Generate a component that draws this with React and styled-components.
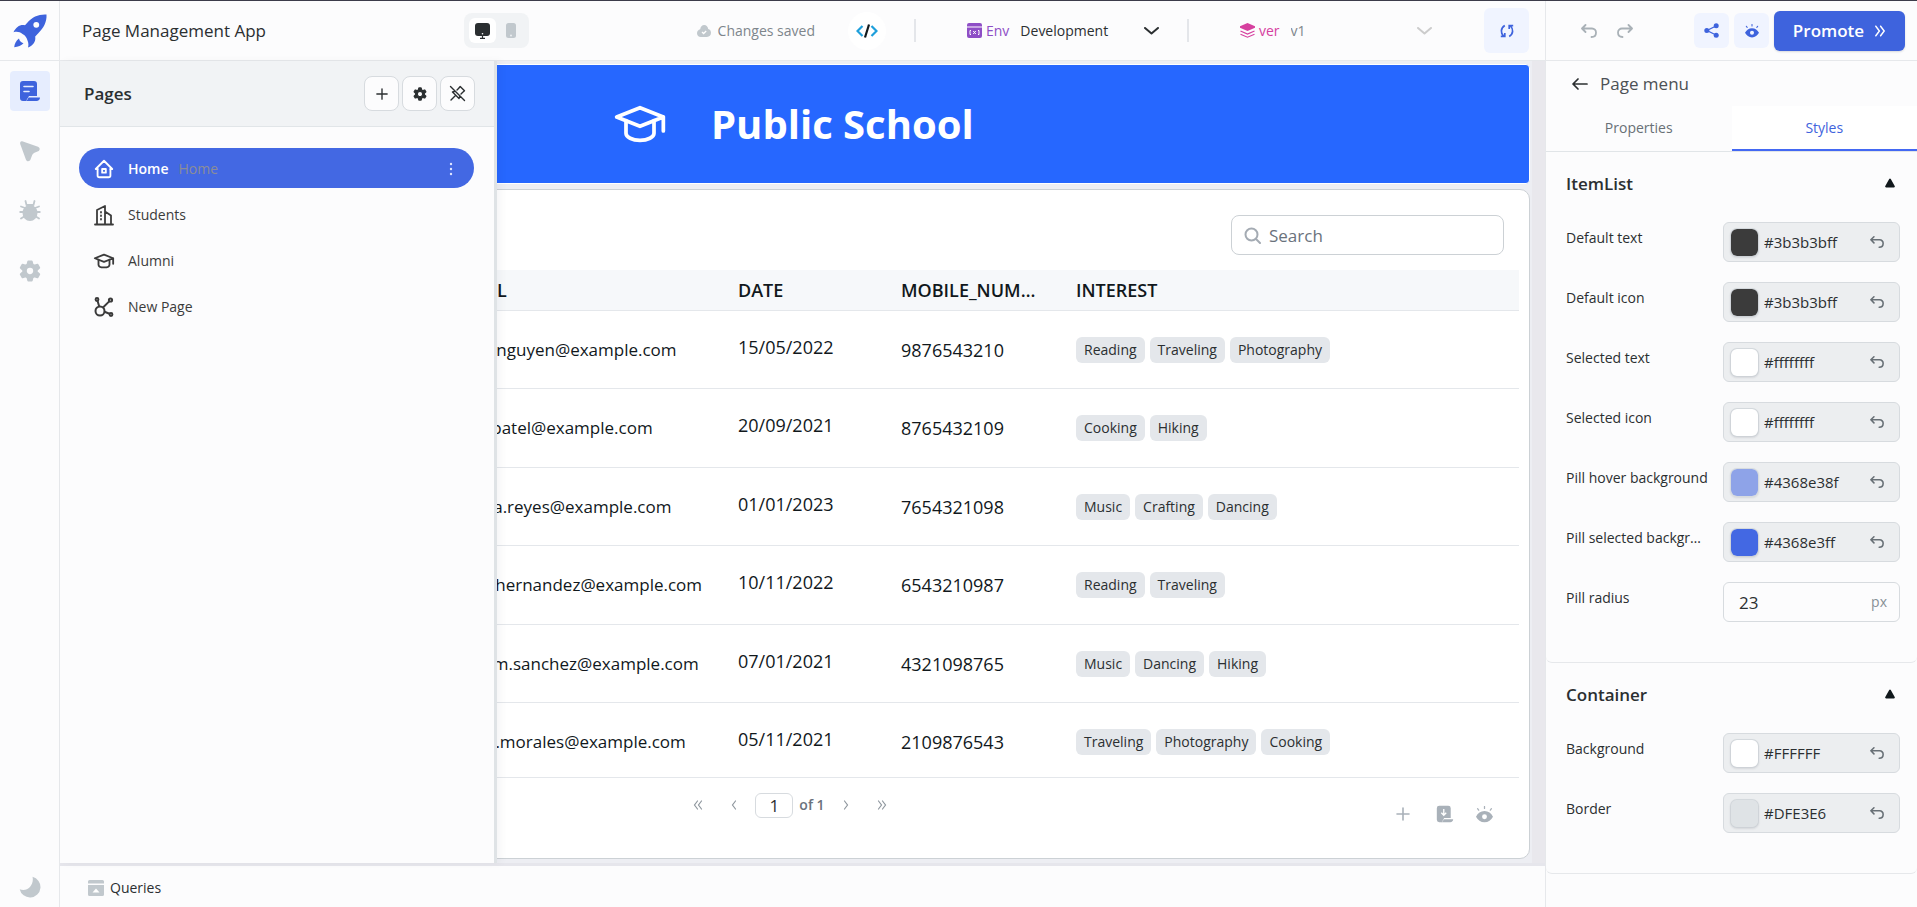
import React, { useState } from 'react';
import styled, { createGlobalStyle } from 'styled-components';
import { TbSchool, TbHome2 } from 'react-icons/tb';

const GlobalStyle = createGlobalStyle`
  * { box-sizing: border-box; }
  body { margin: 0; }
  body, button, input, select {
    font-family: 'Open Sans', 'Noto Sans', sans-serif;
    color: #2b2f31;
  }
  button, input, select { margin: 0; padding: 0; border: 0; background: none; outline: none; }
  button { cursor: pointer; }
  svg { display: block; flex: none; }
`;

const Screen = styled.div`
  display: flex;
  flex-direction: column;
  height: 100vh;
  min-height: 700px;
  border-top: 1px solid #3c3c4a;
  background: #fcfcfd;
  font-size: 14px;
  line-height: 20px;
`;

/* ---------- top bar ---------- */

const TopBar = styled.header`
  display: flex;
  flex: none;
  height: 60px;
  border-bottom: 1px solid #e6e8eb;
`;

const Logo = styled.a`
  display: flex;
  align-items: center;
  justify-content: center;
  width: 60px;
  border-right: 1px solid #e6e8eb;
`;

const TopMain = styled.div`
  display: flex;
  flex: 1;
  align-items: center;
  padding: 0 16px 0 22px;
`;

const AppName = styled.h1`
  width: 382px;
  margin: 0;
  font-size: 17px;
  font-weight: 400;
  line-height: 24px;
`;

const DeviceToggle = styled.div`
  display: flex;
  align-items: center;
  gap: 1px;
  height: 35px;
  margin-right: auto;
  padding: 5px;
  border-radius: 8px;
  background: #f1f3f5;
`;

const DeviceButton = styled.button`
  display: flex;
  align-items: center;
  justify-content: center;
  width: 27px;
  height: 25px;
  border-radius: 6px;
  background: ${(p) => (p.$active ? '#fff' : 'transparent')};
`;

const SaveStatus = styled.div`
  display: flex;
  align-items: center;
  gap: 7px;
  margin-right: 33px;
  color: #7e868c;
`;

const CodeButton = styled.button`
  display: flex;
  align-items: center;
  justify-content: center;
  width: 38px;
  height: 38px;
  border-radius: 50%;
  background: #fff;
`;

const Divider = styled.span`
  width: 2px;
  height: 23px;
  margin: 0 51px 0 28px;
  background: #e4e6ea;
`;

const Picker = styled.div`
  display: flex;
  align-items: center;
  width: 192px;
  color: ${(p) => p.$color};

  label {
    margin: 0 11px 0 4px;
  }
  select {
    flex: 1;
    min-width: 0;
    height: 24px;
    appearance: none;
    font-size: 14px;
    color: ${(p) => (p.$muted ? '#7e868c' : '#2b2f31')};
  }
`;

const SyncButton = styled.button`
  display: flex;
  align-items: center;
  justify-content: center;
  width: 45px;
  height: 45px;
  margin-left: 52px;
  border-radius: 6px;
  background: #f0f4ff;
`;

const TopActions = styled.div`
  display: flex;
  align-items: center;
  gap: 5px;
  width: 372px;
  padding: 0 12px 0 27px;
  border-left: 1px solid #e6e8eb;
`;

const HistoryButton = styled.button`
  display: flex;
  align-items: center;
  justify-content: center;
  width: 31px;
  height: 32px;
`;

const TintButton = styled.button`
  display: flex;
  align-items: center;
  justify-content: center;
  width: 35px;
  height: 35px;
  border-radius: 6px;
  background: #f0f4ff;
`;

const PromoteButton = styled.button`
  display: flex;
  align-items: center;
  justify-content: center;
  gap: 10px;
  width: 131px;
  height: 40px;
  border-radius: 6px;
  background: #3e63dd;
  box-shadow: 0 1px 2px rgba(16, 24, 40, 0.15);
  color: #fff;
  font-size: 17px;
  font-weight: 600;
`;

const Push = styled.span`
  flex: 1;
`;

/* ---------- body ---------- */

const Body = styled.div`
  display: flex;
  flex: 1;
  min-height: 0;
`;

const Rail = styled.nav`
  display: flex;
  flex-direction: column;
  align-items: center;
  gap: 20px;
  width: 60px;
  padding: 10px 0;
  border-right: 1px solid #e6e8eb;
`;

const RailButton = styled.button`
  display: flex;
  align-items: center;
  justify-content: center;
  width: 40px;
  height: 40px;
  border-radius: 4px;
  background: ${(p) => (p.$active ? '#e6edfe' : 'transparent')};

  &:last-child {
    margin-top: auto;
    margin-bottom: -10px;
  }
`;

const Workspace = styled.div`
  position: relative;
  display: flex;
  flex: 1;
  flex-direction: column;
  min-width: 0;
`;

const CanvasArea = styled.main`
  display: flex;
  flex: 1;
  flex-direction: column;
  gap: 5px;
  min-height: 0;
  padding: 3px 2px 4px 0;
  border-right: 13px solid #e9e8ed;
  background: #edeef3;
`;

const QueryBar = styled.footer`
  display: flex;
  flex: none;
  align-items: center;
  height: 44px;
  padding: 2px 0 0 28px;
  border-top: 3px solid #e6e6ec;
  background: #fcfcfd;

  button {
    display: flex;
    align-items: center;
    gap: 6px;
    font-size: 14px;
    font-weight: 500;
  }
`;

/* ---------- pages drawer, floats over the canvas ---------- */

const PagesDrawer = styled.aside`
  position: absolute;
  top: 0;
  bottom: 44px;
  left: 0;
  width: 437px;
  border-right: 3px solid #dfe3e6;
  background: #fcfcfd;
  box-shadow: 4px 0 8px rgba(16, 24, 40, 0.04);
`;

const DrawerHead = styled.div`
  display: flex;
  align-items: center;
  gap: 3px;
  height: 66px;
  padding: 0 19px 0 24px;
  border-bottom: 1px solid #e1e5e8;
  background: #f1f3f5;

  h2 {
    flex: 1;
    margin: 0;
    font-size: 17px;
    font-weight: 600;
  }
`;

const SquareButton = styled.button`
  display: flex;
  align-items: center;
  justify-content: center;
  width: 35px;
  height: 35px;
  border: 1px solid #d7dbdf;
  border-radius: 8px;
  background: #fcfcfd;
`;

const PageList = styled.ul`
  display: flex;
  flex-direction: column;
  gap: 6px;
  margin: 0;
  padding: 21px 20px 21px 19px;
  list-style: none;
`;

const PageItem = styled.li`
  display: flex;
  align-items: center;
  height: 40px;
  padding: 2px 21px 0 14px;
  border-radius: 23px;
  background: ${(p) => (p.$selected ? '#4368e3' : 'transparent')};
  color: ${(p) => (p.$selected ? '#fff' : '#3b3b3b')};

  a {
    display: flex;
    flex: 1;
    align-items: center;
    gap: 13px;
    color: inherit;
    font-weight: ${(p) => (p.$selected ? 600 : 400)};
    text-decoration: none;
  }
  small {
    margin-left: -3px;
    font-size: 14px;
    font-weight: 400;
    color: #8b8d98;
  }
`;

/* ---------- canvas widgets ---------- */

const Banner = styled.section`
  display: flex;
  flex: none;
  align-items: center;
  gap: 43px;
  height: 120px;
  padding-left: 551px;
  border: 1px solid #fff;
  border-radius: 4px;
  background: #2667ff;
  color: #fff;

  h2 {
    margin: 0;
    font-size: 40px;
    font-weight: 700;
    line-height: 48px;
  }
`;

const TableCard = styled.section`
  display: flex;
  flex: 1;
  flex-direction: column;
  min-height: 0;
  padding-right: 10px;
  border: 1px solid #ccd1d5;
  border-radius: 10px;
  background: #fff;
`;

const TableTools = styled.div`
  display: flex;
  flex: none;
  justify-content: flex-end;
  padding: 25px 15px 15px 0;
`;

const SearchBox = styled.label`
  display: flex;
  align-items: center;
  gap: 8px;
  width: 273px;
  height: 40px;
  padding: 0 12px;
  border: 1px solid #ccd1d5;
  border-radius: 8px;

  input {
    flex: 1;
    min-width: 0;
    font-size: 17px;
  }
  input::placeholder {
    color: #6a727c;
    opacity: 1;
  }
`;

const TableScroll = styled.div`
  flex: 1;
  min-height: 0;
  overflow: hidden;
`;

const DataTable = styled.table`
  width: 100%;
  table-layout: fixed;
  border-collapse: separate;
  border-spacing: 0;
  color: #11181c;

  th {
    height: 41px;
    padding: 0 24px 0 12px;
    overflow: hidden;
    border-bottom: 1px solid #e4e7eb;
    background: #f6f8fa;
    font-size: 18px;
    font-weight: 600;
    text-align: left;
    text-overflow: ellipsis;
    white-space: nowrap;
  }
  td {
    height: 78px;
    padding: 0 12px;
    border-bottom: 1px solid #e4e7eb;
    font-size: 17px;
    white-space: nowrap;
  }
  tbody tr:nth-child(even) td {
    height: 79px;
  }
`;

const Numeric = styled.div`
  padding-bottom: ${(p) => (p.$raised ? 6 : 0)}px;
  font-size: 18px;
`;

const Tags = styled.div`
  display: flex;
  gap: 5px;
`;

const Tag = styled.span`
  padding: 3px 8px;
  border-radius: 6px;
  background: #e4e7eb;
  color: #2b2f31;
  font-size: 14px;
`;

const TableFooter = styled.div`
  display: grid;
  flex: none;
  grid-template-columns: 1fr auto 1fr;
  height: 81px;
  border-top: 1px solid #e4e7eb;
`;

const Pagination = styled.div`
  display: flex;
  grid-column: 2;
  align-items: center;
  gap: 6px;
  height: 54px;
  color: #6a727c;
  font-weight: 600;

  button {
    display: flex;
    align-items: center;
    justify-content: center;
    width: 30px;
    height: 30px;
  }
  input {
    width: 38px;
    height: 25px;
    border: 1px solid #d7dbdf;
    border-radius: 6px;
    font-size: 17px;
    text-align: center;
  }
`;

const TableActions = styled.div`
  display: flex;
  align-items: center;
  justify-content: flex-end;
  gap: 20px;
  height: 72px;
  padding-right: 23px;

  button {
    width: 20px;
    height: 20px;
  }
`;

/* ---------- inspector ---------- */

const Inspector = styled.aside`
  width: 372px;
  border-left: 1px solid #e6e8eb;
  background: #fcfcfd;
`;

const InspectorTitle = styled.div`
  display: flex;
  align-items: center;
  gap: 12px;
  height: 45px;
  padding-left: 26px;
  color: #4c5155;
  font-size: 17px;
`;

const TabList = styled.div`
  display: flex;
  height: 46px;
  border-bottom: 1px solid #e1e5e8;
`;

const Tab = styled.button`
  flex: 1;
  border-bottom: 2px solid ${(p) => (p.$active ? '#4368f3' : 'transparent')};
  background: ${(p) => (p.$active ? '#fff' : 'transparent')};
  color: ${(p) => (p.$active ? '#3e63dd' : '#687076')};
  font-size: 14px;
`;

const Section = styled.section`
  padding: 19px 17px 40px 20px;
  border-bottom: 1px solid #e6e8eb;
  border-radius: 0 0 6px 6px;
`;

const SectionHead = styled.button`
  display: flex;
  align-items: center;
  justify-content: space-between;
  width: 100%;
  height: 24px;
  margin-bottom: 27px;
  padding-right: 5px;
  font-size: 17px;
  font-weight: 600;
`;

const FieldRow = styled.div`
  display: flex;
  justify-content: space-between;
  margin-top: ${(p) => (p.$first ? 0 : 20)}px;

  > label {
    width: 143px;
    padding-top: 6px;
    overflow: hidden;
    text-overflow: ellipsis;
    white-space: nowrap;
  }
`;

const FieldBox = styled.div`
  display: flex;
  align-items: center;
  width: 177px;
  height: 40px;
  padding: ${(p) => (p.$plain ? '0 12px 0 15px' : '0 9px 0 6px')};
  border: 1px solid #d7dbdf;
  border-radius: 6px;
  background: ${(p) => (p.$plain ? '#fcfcfd' : '#eceef0')};
  color: #889096;

  input {
    flex: 1;
    width: 0;
    font-size: ${(p) => (p.$plain ? 17 : 15)}px;
  }
`;

const Swatch = styled.span`
  width: 29px;
  height: 29px;
  margin-right: 5px;
  border: 1px solid rgba(200, 206, 212, 0.6);
  border-radius: 7px;
  background: ${(p) => p.$color};
  background-clip: padding-box;
  box-shadow: 0 1px 2px rgba(16, 24, 40, 0.1);
`;

const UndoButton = styled.button`
  width: 20px;
  height: 14px;
`;

/* ---------- icons ---------- */

const Rocket = () => (
  <svg width="34" height="34" viewBox="0 0 34 34" fill="#3e63dd">
    <path fillRule="evenodd" d="M33.500 0.500C26 0 19 3 14.500 8.500L12 11.200C7 10.200 3 13 0.500 18.200C4.500 17.200 7 18.200 9.500 20C12.500 21.500 14 24 14.500 26.500C15.500 29 15.700 31 15 33.500C20 31.500 23 28 22.200 22.500L25.500 19C30.500 14 34 8 33.500 0.500ZM23.200 7.900a2.900 2.900 0 1 0 .1 5.800a2.900 2.900 0 0 0 0-5.800Z" />
    <path d="M6 24.500C6.500 27 8 28.500 10.500 29.200C8.500 31.500 5 33 1.200 33.200C1.500 30 3 26.500 6 24.500Z" />
  </svg>
);

const PageIcon = () => (
  <svg width="22" height="22" viewBox="0 0 22 22">
    <path d="M4 1h11a3 3 0 0 1 3 3v12H10l-3 5H4a3 3 0 0 1-3-3V4a3 3 0 0 1 3-3Z" fill="#3e63dd" />
    <path d="M9.500 17.500h11.500c0 2-1.500 3.500-3.500 3.500H6.500c1.500-.5 2.300-1.800 3-3.500Z" fill="#3e63dd" />
    <path d="M5 6.500h9M5 11.500h5" stroke="#e6edfe" strokeWidth="1.600" strokeLinecap="round" />
  </svg>
);

const CursorIcon = () => (
  <svg width="22" height="22" viewBox="0 0 22 22" fill="#c1c8cd">
    <path d="M3.200 1.200 19 6.700c2.200.8 2.300 3.700.1 4.600l-3.600 1.400a4 4 0 0 0-2.300 2.300l-1.700 4.600c-.9 2.200-4 2-4.600-.2L1.200 4C.8 2.200 1.700.8 3.200 1.200Z" />
  </svg>
);

const BugIcon = () => (
  <svg width="22" height="22" viewBox="0 0 22 22">
    <path d="m7.500 5-1-4M14.500 5l1-4M6 8 2 6.500M16 8l4-1.500M5 12H1.200M17 12h3.800M6 16l-4 2.500M16 16l4 2.500" stroke="#c1c8cd" strokeWidth="1.800" strokeLinecap="round" />
    <path d="M7.500 4h7v3h-7z" fill="#c1c8cd" />
    <ellipse cx="11" cy="13" rx="7.500" ry="8" fill="#c1c8cd" />
  </svg>
);

const GearIcon = ({ size = 22, color = '#c1c8cd' }) => (
  <svg width={size} height={size} viewBox="0 0 22 22" fill={color}>
    <path fillRule="evenodd" stroke={color} strokeWidth="2" strokeLinejoin="round" d="m9.300 1.500 3.400 0 .8 3.100 1.800 1.100 3.200-1 1.700 3-2.400 2.200v2.200l2.400 2.200-1.700 3-3.200-1-1.800 1.100-.8 3.100H9.300l-.8-3.100-1.800-1.100-3.200 1-1.700-3 2.400-2.200V9.900L1.800 7.700l1.700-3 3.200 1 1.800-1.100ZM11 6.800a4.200 4.200 0 1 0 0 8.400 4.200 4.200 0 0 0 0-8.400Z" />
  </svg>
);

const MoonIcon = () => (
  <svg width="22" height="22" viewBox="0 0 22 22" fill="#c1c8cd">
    <path d="M13.500.8A10.500 10.500 0 1 1 .7 13.200C8 16.500 15.500 9 13.500.8Z" />
  </svg>
);

const MonitorIcon = () => (
  <svg width="15" height="16" viewBox="0 0 15 16" fill="#2b2f31">
    <rect width="15" height="13" rx="3" />
    <path d="M7.500 12v3M5 15.300h5" stroke="#2b2f31" strokeWidth="1.200" />
    <circle cx="7.500" cy="10.800" r="0.800" fill="#fff" />
  </svg>
);

const PhoneIcon = () => (
  <svg width="10" height="15" viewBox="0 0 10 15">
    <rect width="10" height="15" rx="2.500" fill="#c1c8cd" />
    <circle cx="5" cy="12.500" r="0.900" fill="#f1f3f5" />
  </svg>
);

const CloudIcon = () => (
  <svg width="14" height="12" viewBox="0 0 14 12">
    <path d="M3.200 4.200C3.500 1.800 5 0 7.200 0s3.800 1.700 4 4c1.800.5 2.800 1.900 2.800 3.800 0 2.300-1.600 4.200-4 4.200H3.800C1.600 12 0 10.300 0 8.200c0-2 1.300-3.600 3.200-4Z" fill="#c1c8cd" />
    <path d="m5 7 1.600 1.500L9.200 6" stroke="#fff" strokeWidth="1.300" fill="none" />
  </svg>
);

const CodeIcon = () => (
  <svg width="22" height="14" viewBox="0 0 22 14" fill="none" strokeWidth="2.200">
    <path d="M6.500 2 1.500 7l5 5M15.500 2l5 5-5 5" stroke="#1e9fdb" />
    <path d="M13 .5 9 13.500" stroke="#11181c" />
  </svg>
);

const EnvIcon = () => (
  <svg width="15" height="15" viewBox="0 0 15 15">
    <path d="M2 0h11a2 2 0 0 1 2 2v1H0V2a2 2 0 0 1 2-2ZM0 4.500h15V13a2 2 0 0 1-2 2H2a2 2 0 0 1-2-2Z" fill="#8e4ec6" />
    <path d="M0 3h15v1.500H0z" fill="#c9a5e5" />
    <path d="M4 7.500H3v4h1M11 7.500h1v4h-1M6.200 8l2.600 3M8.800 8l-2.600 3" stroke="#fff" fill="none" />
  </svg>
);

const LayersIcon = () => (
  <svg width="15" height="15" viewBox="0 0 15 15">
    <path d="M7.500 0 15 3.200v1.600L7.500 8 0 4.800V3.200Z" fill="#d6409f" />
    <path d="m.5 8 7 3 7-3M.5 11.200l7 3 7-3" stroke="#d6409f" strokeWidth="1.200" fill="none" />
  </svg>
);

const Chevron = ({ color }) => (
  <svg width="15" height="8" viewBox="0 0 15 8" fill="none" stroke={color} strokeWidth="2" strokeLinecap="round" strokeLinejoin="round">
    <path d="m1 1 6.500 5.500L14 1" />
  </svg>
);

const SyncIcon = () => (
  <svg width="14" height="14" viewBox="0 0 14 14" fill="none" stroke="#3e63dd" strokeWidth="1.700">
    <path d="M4.800 1.500C.5 4 .5 9 3.500 12M.8 12.300h4V9M9.200 12.500c4.300-2.500 4.300-7.500 1.300-10.500M13.200 1.700h-4V5" />
  </svg>
);

const UndoIcon = ({ size = 16, color = '#a9b1b7', flip }) => (
  <svg width={size} height={size} viewBox="0 0 16 16" fill="none" stroke={color} strokeWidth="1.800" strokeLinecap="round" strokeLinejoin="round">
    <path d={flip ? 'M11.500 2 15 5.500 11.500 9M14.500 5.500H5a4 4 0 0 0-4 4c0 3 1.500 4.500 4.500 4.500' : 'M4.500 2 1 5.500 4.500 9M1.500 5.500H11a4 4 0 0 1 4 4.200c0 2.800-1.500 4.300-4.500 4.300'} />
  </svg>
);

const ShareIcon = () => (
  <svg width="15" height="15" viewBox="0 0 15 15" fill="#3e63dd">
    <path d="M12 3 3 7.500l9 4.500" stroke="#3e63dd" strokeWidth="1.300" fill="none" />
    <circle cx="2.800" cy="7.500" r="2.500" />
    <circle cx="12.200" cy="2.700" r="2.500" />
    <circle cx="12.200" cy="12.300" r="2.500" />
  </svg>
);

const EyeIcon = ({ size = 14, color = '#3e63dd' }) => (
  <svg width={size} height={size} viewBox="0 0 16 16">
    <path d="M1.500 2.500l1 1.400M8 .5v1.800M14.500 2.500l-1 1.400" stroke={color} strokeWidth="1.200" strokeLinecap="round" />
    <path fillRule="evenodd" d="M8 4.800c3.600 0 6.300 2.200 8 5.300-1.700 3.100-4.400 5.300-8 5.300S1.700 13.200 0 10.100C1.700 7 4.400 4.800 8 4.800Zm0 3a2.300 2.300 0 1 0 0 4.600 2.300 2.300 0 0 0 0-4.600Z" fill={color} />
  </svg>
);

const Arrows = ({ double, left, size = 10, color = '#8f979e' }) => (
  <svg width={size} height={size} viewBox="0 0 10 10" fill="none" stroke={color} strokeWidth="1.200" strokeLinecap="round">
    {!double && <path d={left ? 'M6.500 1 3.500 5l3 4' : 'm3.500 1 3 4-3 4'} />}
    {double && <path d={left ? 'M4.500 1 1.500 5l3 4M8.500 1 5.500 5l3 4' : 'm1.500 1 3 4-3 4M5.500 1l3 4-3 4'} />}
  </svg>
);

const PlusIcon = ({ size, color }) => (
  <svg width={size} height={size} viewBox="0 0 14 14" stroke={color} strokeWidth="1.600" strokeLinecap="round">
    <path d="M7 1v12M1 7h12" />
  </svg>
);

const UnpinIcon = () => (
  <svg width="17" height="17" viewBox="0 0 17 17" fill="none" stroke="#2b2f31" strokeWidth="1.400" strokeLinecap="round" strokeLinejoin="round">
    <path d="m1.500 1.500 14 14M9.500 3.500 11.200 1.500l4.300 4.300-2 1.700-1.500 1.500M9.500 3.500 8 5M5.500 6.500 3.500 7l6.500 6.500.8-2.500M6.500 10.500l-4.500 4.500" />
  </svg>
);

const DotsIcon = () => (
  <svg width="4" height="14" viewBox="0 0 4 14" fill="#dfe6ff">
    <circle cx="2" cy="2" r="1.200" />
    <circle cx="2" cy="7" r="1.200" />
    <circle cx="2" cy="12" r="1.200" />
  </svg>
);

const BuildingIcon = () => (
  <svg width="22" height="22" viewBox="0 0 22 22" fill="none" stroke="currentColor" strokeWidth="1.800" strokeLinecap="round" strokeLinejoin="round">
    <path d="M2 20.500h18M4 20.500V6l8-4v18.500M12 7.500l6 4v9" />
    <path d="M8 8v10" strokeDasharray="0.500 3" />
  </svg>
);

const NodesIcon = () => (
  <svg width="22" height="22" viewBox="0 0 22 22" fill="none" stroke="currentColor" strokeWidth="2">
    <circle cx="7" cy="15" r="4.500" />
    <circle cx="4" cy="3.500" r="1.400" />
    <circle cx="17.500" cy="4" r="1.600" />
    <circle cx="18" cy="18.500" r="1.400" />
    <path d="m4.600 5 1.600 5.500M16.200 5.400 10 11.500M11.500 15.700l5 2" />
  </svg>
);

const DownloadIcon = () => (
  <svg width="18" height="18" viewBox="0 0 22 22" fill="#a9b1b9">
    <path d="M4 1h11a3 3 0 0 1 3 3v12H10l-3 5H4a3 3 0 0 1-3-3V4a3 3 0 0 1 3-3Z" />
    <path d="M9.500 17.500H21c0 2-1.500 3.500-3.500 3.500h-11c1.500-.5 2.300-1.800 3-3.500Z" />
    <path d="M9.500 5v7M6.500 9.500l3 3 3-3" stroke="#fff" strokeWidth="1.600" fill="none" />
  </svg>
);

const SearchIcon = () => (
  <svg width="17" height="17" viewBox="0 0 17 17" fill="none" stroke="#a4abb3" strokeWidth="2" strokeLinecap="round">
    <circle cx="7.500" cy="7.500" r="6" />
    <path d="m12 12 4 4" />
  </svg>
);

const BackIcon = () => (
  <svg width="16" height="12" viewBox="0 0 16 12" fill="none" stroke="#2b2f31" strokeWidth="1.700" strokeLinecap="round" strokeLinejoin="round">
    <path d="M6 1 1 6l5 5M1.500 6H15" />
  </svg>
);

const Triangle = () => (
  <svg width="10" height="10" viewBox="0 0 10 10" fill="#11181c">
    <path d="M4.200 1a1 1 0 0 1 1.600 0l3.900 7c.4.700 0 1.500-.8 1.500H1.100C.3 9.500-.1 8.700.3 8Z" />
  </svg>
);

const QueriesIcon = () => (
  <svg width="16" height="16" viewBox="0 0 16 16">
    <path d="M1.500 0h13A1.500 1.500 0 0 1 16 1.500V3.500H0V1.500A1.500 1.500 0 0 1 1.500 0ZM0 5h16v9.500a1.500 1.500 0 0 1-1.500 1.500h-13A1.500 1.500 0 0 1 0 14.500Z" fill="#c1c8cd" />
    <path d="m8 8.500 3.500 4h-7Z" fill="#fff" />
  </svg>
);

/* ---------- data ---------- */

const pages = [
  { name: 'Home', icon: <TbHome2 size={22} /> },
  { name: 'Students', icon: <BuildingIcon /> },
  { name: 'Alumni', icon: <TbSchool size={22} /> },
  { name: 'New Page', icon: <NodesIcon /> },
];

const rows = [
  { email: 'linda.nguyen@example.com', date: '15/05/2022', mobile: '9876543210', interest: ['Reading', 'Traveling', 'Photography'] },
  { email: 'liam.patel@example.com', date: '20/09/2021', mobile: '8765432109', interest: ['Cooking', 'Hiking'] },
  { email: 'teresa.reyes@example.com', date: '01/01/2023', mobile: '7654321098', interest: ['Music', 'Crafting', 'Dancing'] },
  { email: 'sofia.hernandez@example.com', date: '10/11/2022', mobile: '6543210987', interest: ['Reading', 'Traveling'] },
  { email: 'william.sanchez@example.com', date: '07/01/2021', mobile: '4321098765', interest: ['Music', 'Dancing', 'Hiking'] },
  { email: 'emily.morales@example.com', date: '05/11/2021', mobile: '2109876543', interest: ['Traveling', 'Photography', 'Cooking'] },
];

const itemStyles = [
  ['Default text', '#3b3b3bff'],
  ['Default icon', '#3b3b3bff'],
  ['Selected text', '#ffffffff'],
  ['Selected icon', '#ffffffff'],
  ['Pill hover background', '#4368e38f'],
  ['Pill selected background', '#4368e3ff'],
];

const containerStyles = [
  ['Background', '#FFFFFF'],
  ['Border', '#DFE3E6'],
];

const ColorField = ({ label, value, first }) => {
  const id = label.toLowerCase().replace(/ /g, '-');
  return (
    <FieldRow $first={first}>
      <label htmlFor={id}>{label}</label>
      <FieldBox>
        <Swatch $color={value} />
        <input id={id} defaultValue={value} />
        <UndoButton aria-label={`Reset ${label}`}><UndoIcon size={14} color="#687076" /></UndoButton>
      </FieldBox>
    </FieldRow>
  );
};

const Header = () => (
  <TopBar>
    <Logo href="#" aria-label="Dashboard"><Rocket /></Logo>
    <TopMain>
      <AppName>Page Management App</AppName>
      <DeviceToggle>
        <DeviceButton $active aria-label="Desktop"><MonitorIcon /></DeviceButton>
        <DeviceButton aria-label="Mobile"><PhoneIcon /></DeviceButton>
      </DeviceToggle>
      <SaveStatus><CloudIcon />Changes saved</SaveStatus>
      <CodeButton aria-label="Code"><CodeIcon /></CodeButton>
      <Divider />
      <Picker $color="#8e4ec6">
        <EnvIcon />
        <label htmlFor="env">Env</label>
        <select id="env"><option>Development</option></select>
        <Chevron color="#2b2f31" />
      </Picker>
      <Divider />
      <Picker $color="#d6409f" $muted>
        <LayersIcon />
        <label htmlFor="ver">ver</label>
        <select id="ver"><option>v1</option></select>
        <Chevron color="#cccccc" />
      </Picker>
      <SyncButton aria-label="Sync"><SyncIcon /></SyncButton>
    </TopMain>
    <TopActions>
      <HistoryButton aria-label="Undo"><UndoIcon /></HistoryButton>
      <HistoryButton aria-label="Redo"><UndoIcon flip /></HistoryButton>
      <Push />
      <TintButton aria-label="Share"><ShareIcon /></TintButton>
      <TintButton aria-label="Preview"><EyeIcon /></TintButton>
      <PromoteButton>Promote<Arrows double size={12} color="#fff" /></PromoteButton>
    </TopActions>
  </TopBar>
);

const App = () => {
  const [page, setPage] = useState('Home');
  const [tab, setTab] = useState('Styles');

  return (
    <Screen>
      <GlobalStyle />
      <Header />
      <Body>
        <Rail>
          <RailButton $active aria-label="Pages"><PageIcon /></RailButton>
          <RailButton aria-label="Inspector"><CursorIcon /></RailButton>
          <RailButton aria-label="Debugger"><BugIcon /></RailButton>
          <RailButton aria-label="Settings"><GearIcon /></RailButton>
          <RailButton aria-label="Dark mode"><MoonIcon /></RailButton>
        </Rail>

        <Workspace>
          <CanvasArea>
            <Banner>
              <TbSchool size={56} strokeWidth={1.6} />
              <h2>Public School</h2>
            </Banner>
            <TableCard>
              <TableTools>
                <SearchBox>
                  <SearchIcon />
                  <input placeholder="Search" aria-label="Search" />
                </SearchBox>
              </TableTools>
              <TableScroll>
                <DataTable>
                  <colgroup>
                    <col width="380" />
                    <col width="285" />
                    <col width="163" />
                    <col width="175" />
                    <col />
                  </colgroup>
                  <thead>
                    <tr>
                      <th />
                      <th>EMAIL</th>
                      <th>DATE</th>
                      <th>MOBILE_NUMBER</th>
                      <th>INTEREST</th>
                    </tr>
                  </thead>
                  <tbody>
                    {rows.map((row) => (
                      <tr key={row.email}>
                        <td />
                        <td>{row.email}</td>
                        <td><Numeric $raised>{row.date}</Numeric></td>
                        <td><Numeric>{row.mobile}</Numeric></td>
                        <td><Tags>{row.interest.map((tag) => <Tag key={tag}>{tag}</Tag>)}</Tags></td>
                      </tr>
                    ))}
                  </tbody>
                </DataTable>
              </TableScroll>
              <TableFooter>
                <Pagination>
                  <button aria-label="First page"><Arrows double left /></button>
                  <button aria-label="Previous page"><Arrows left /></button>
                  <input aria-label="Page number" defaultValue="1" />
                  <span>of 1</span>
                  <button aria-label="Next page"><Arrows /></button>
                  <button aria-label="Last page"><Arrows double /></button>
                </Pagination>
                <TableActions>
                  <button aria-label="Add row"><PlusIcon size={14} color="#a9b1b9" /></button>
                  <button aria-label="Download"><DownloadIcon /></button>
                  <button aria-label="Columns"><EyeIcon size={17} color="#a9b1b9" /></button>
                </TableActions>
              </TableFooter>
            </TableCard>
          </CanvasArea>

          <QueryBar>
            <button><QueriesIcon />Queries</button>
          </QueryBar>

          <PagesDrawer>
            <DrawerHead>
              <h2>Pages</h2>
              <SquareButton aria-label="Add page"><PlusIcon size={12} color="#2b2f31" /></SquareButton>
              <SquareButton aria-label="Page settings"><GearIcon size={14} color="#2b2f31" /></SquareButton>
              <SquareButton aria-label="Unpin"><UnpinIcon /></SquareButton>
            </DrawerHead>
            <PageList>
              {pages.map(({ name, icon }) => (
                <PageItem key={name} $selected={page === name}>
                  <a href="#" onClick={() => setPage(name)}>
                    {icon}
                    {name}
                    {name === 'Home' && <small>Home</small>}
                  </a>
                  {page === name && <DotsIcon />}
                </PageItem>
              ))}
            </PageList>
          </PagesDrawer>
        </Workspace>

        <Inspector>
          <InspectorTitle><BackIcon />Page menu</InspectorTitle>
          <TabList>
            {['Properties', 'Styles'].map((name) => (
              <Tab key={name} $active={tab === name} onClick={() => setTab(name)}>{name}</Tab>
            ))}
          </TabList>
          <Section>
            <SectionHead>ItemList<Triangle /></SectionHead>
            {itemStyles.map(([label, value], i) => (
              <ColorField key={label} label={label} value={value} first={i === 0} />
            ))}
            <FieldRow>
              <label htmlFor="pill-radius">Pill radius</label>
              <FieldBox $plain>
                <input id="pill-radius" defaultValue="23" />
                px
              </FieldBox>
            </FieldRow>
          </Section>
          <Section>
            <SectionHead>Container<Triangle /></SectionHead>
            {containerStyles.map(([label, value], i) => (
              <ColorField key={label} label={label} value={value} first={i === 0} />
            ))}
          </Section>
        </Inspector>
      </Body>
    </Screen>
  );
};

export default App;
